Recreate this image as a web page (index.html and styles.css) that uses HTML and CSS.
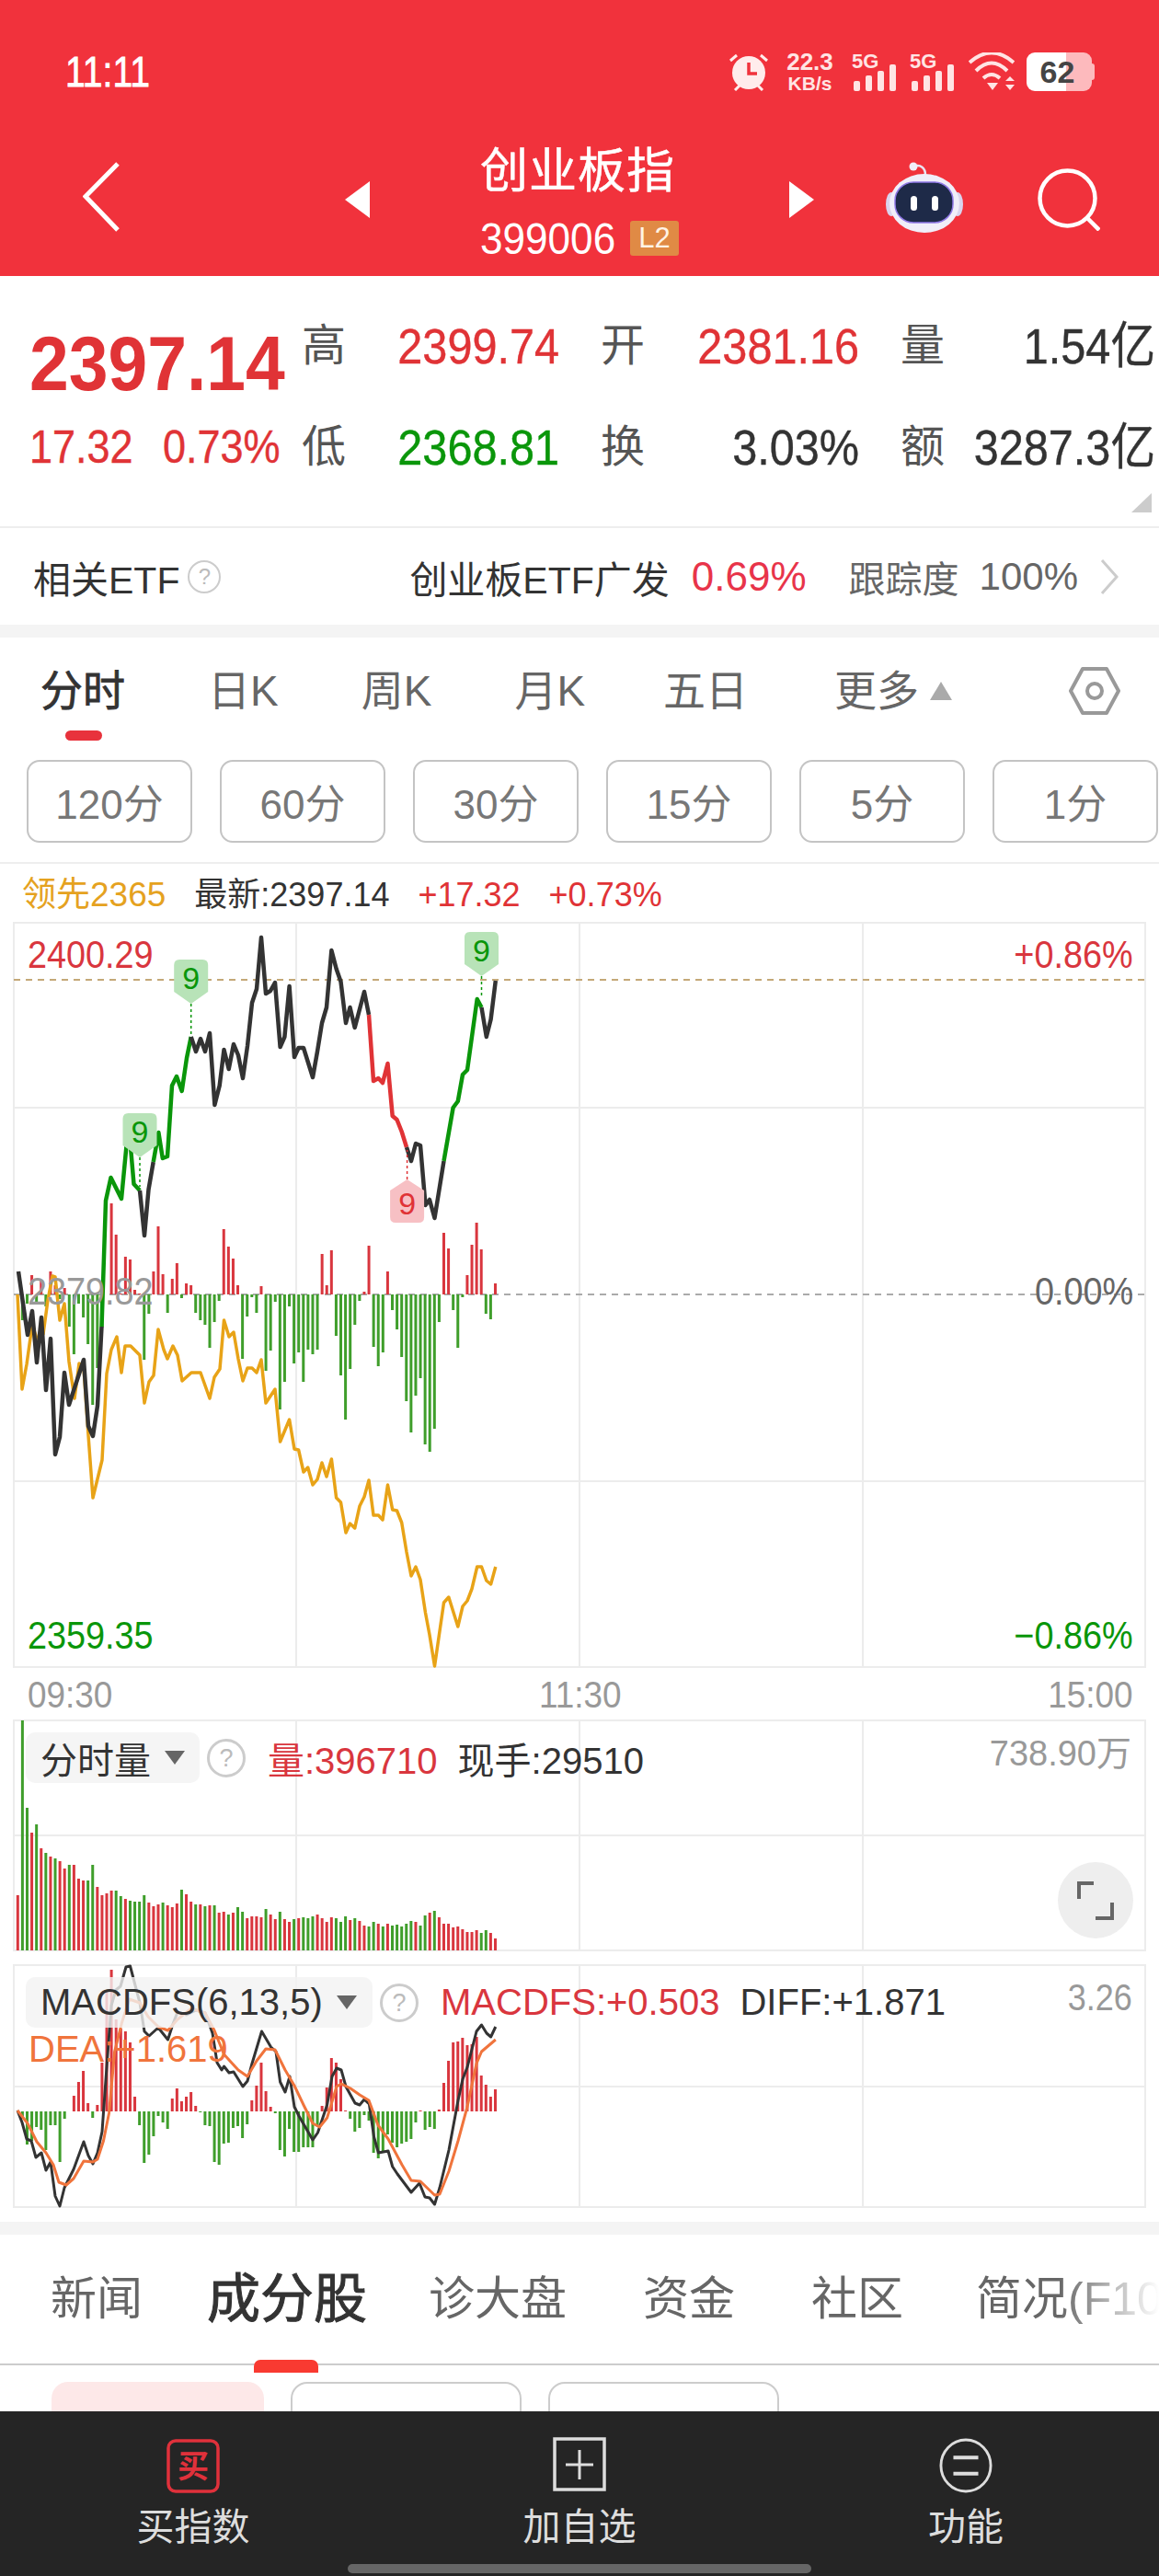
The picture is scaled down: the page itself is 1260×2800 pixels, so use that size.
FILE: index.html
```html
<!DOCTYPE html>
<html lang="zh-CN">
<head>
    <meta charset="UTF-8">
    <meta name="viewport" content="width=device-width, initial-scale=1.0">
    <title>创业板指 399006</title>
    <link rel="stylesheet" href="styles.css">
</head>
<body>
    <div class="app">
        <header class="topbar">
            <div class="status-row">
                <span class="clock">11:11</span>
                <div class="status-icons">
                    <svg class="alarm" viewBox="0 0 44 42">
                        <circle cx="22" cy="22" r="18" fill="#ffecec"/>
                        <path d="M22 11v12h9" fill="none" stroke="#f1323c" stroke-width="3.5"/>
                        <path d="M2 9l7-6M42 9l-7-6M7 41l5-5M37 41l-5-5" stroke="#ffecec" stroke-width="3"/>
                    </svg>
                    <div class="speed"><span class="speed-num">22.3</span><span class="speed-unit">KB/s</span></div>
                    <svg class="signal" viewBox="0 0 50 42">
                        <text x="0" y="17" class="signal-text">5G</text>
                        <rect x="2" y="31" width="7" height="11" rx="2"/>
                        <rect x="15" y="25" width="7" height="17" rx="2"/>
                        <rect x="28" y="20" width="7" height="22" rx="2"/>
                        <rect x="41" y="13" width="7" height="29" rx="2"/>
                    </svg>
                    <svg class="signal" viewBox="0 0 50 42">
                        <text x="0" y="17" class="signal-text">5G</text>
                        <rect x="2" y="31" width="7" height="11" rx="2"/>
                        <rect x="15" y="25" width="7" height="17" rx="2"/>
                        <rect x="28" y="20" width="7" height="22" rx="2"/>
                        <rect x="41" y="13" width="7" height="29" rx="2"/>
                    </svg>
                    <svg class="wifi" viewBox="0 0 50 42">
                        <path d="M1 11Q25-10 49 11M8 20Q25 3 42 20M16 28Q25 20 34 28" fill="none" stroke="#ffe4e4" stroke-width="4"/>
                        <path d="M20 33h12l-6 8zM40 31l5-5 5 5zM40 35h10l-5 6z" fill="#ffe4e4"/>
                    </svg>
                    <div class="battery">62</div>
                </div>
            </div>
            <nav class="nav-row">
                <svg class="back-icon" viewBox="0 0 40 76">
                    <path d="M38 2L3 37.5 38 74" fill="none" stroke="#fff" stroke-width="5"/>
                </svg>
                <span class="arrow arrow-left"></span>
                <div class="title-block">
                    <div class="title">创业板指</div>
                    <div class="subtitle"><span class="code">399006</span><span class="level-tag">L2</span></div>
                </div>
                <span class="arrow arrow-right"></span>
                <svg class="robot-icon" viewBox="0 0 84 77">
                    <path d="M30 5c8-3 13 2 13 9" fill="none" stroke="#e9e6f5" stroke-width="2.5"/>
                    <circle cx="30" cy="5" r="4.5" fill="#f1eff9"/>
                    <ellipse cx="6" cy="46" rx="6" ry="13" fill="#d9d4ee"/>
                    <ellipse cx="78" cy="46" rx="6" ry="13" fill="#d9d4ee"/>
                    <ellipse cx="42" cy="45" rx="38" ry="32" fill="#f0eef9"/>
                    <rect x="10" y="22" width="63" height="44" rx="20" fill="#1e2a48" stroke="#8f78e6" stroke-width="1.5"/>
                    <rect x="27" y="37" width="7" height="16" rx="3.5" fill="#fff"/>
                    <rect x="50" y="37" width="7" height="16" rx="3.5" fill="#fff"/>
                </svg>
                <svg class="search-icon" viewBox="0 0 68 68">
                    <circle cx="32.5" cy="32.5" r="30" fill="none" stroke="#fff" stroke-width="4.5"/>
                    <path d="M54 54l13 13" stroke="#fff" stroke-width="4.5"/>
                </svg>
            </nav>
        </header>

        <section class="quote">
            <div class="big-price up">2397.14</div>
            <div class="q-label">高</div>
            <div class="q-value up">2399.74</div>
            <div class="q-label wide">开</div>
            <div class="q-value up">2381.16</div>
            <div class="q-label wide">量</div>
            <div class="q-value">1.54亿</div>

            <div class="change up"><span class="change-num">17.32</span><span class="change-num">0.73%</span></div>
            <div class="q-label">低</div>
            <div class="q-value down">2368.81</div>
            <div class="q-label wide">换</div>
            <div class="q-value">3.03%</div>
            <div class="q-label wide">额</div>
            <div class="q-value">3287.3亿</div>
            <span class="corner-mark"></span>
        </section>

        <section class="etf-row">
            <span class="etf-title">相关ETF</span>
            <span class="help help-small">?</span>
            <div class="etf-info">
                <span class="etf-name">创业板ETF广发</span>
                <span class="etf-rate">0.69%</span>
                <span class="etf-track">跟踪度</span>
                <span class="etf-track-num">100%</span>
                <svg class="etf-more" viewBox="0 0 20 38">
                    <path d="M2 1l16 18L2 37" fill="none" stroke="#ccc" stroke-width="3"/>
                </svg>
            </div>
        </section>
        <div class="band"></div>

        <section class="period-tabs">
            <span class="period-tab active">分时</span>
            <span class="period-tab">日K</span>
            <span class="period-tab">周K</span>
            <span class="period-tab">月K</span>
            <span class="period-tab tab-five">五日</span>
            <span class="period-tab tab-more">更多</span>
            <span class="more-caret"></span>
            <svg class="settings-icon" viewBox="0 0 56 54">
                <path d="M15 3h26l13 24-13 24H15L2 27z" fill="none" stroke="#999" stroke-width="4" stroke-linejoin="round"/>
                <circle cx="28" cy="27" r="8" fill="none" stroke="#999" stroke-width="4"/>
            </svg>
        </section>

        <section class="minute-row">
            <button class="minute-btn">120分</button>
            <button class="minute-btn">60分</button>
            <button class="minute-btn">30分</button>
            <button class="minute-btn">15分</button>
            <button class="minute-btn">5分</button>
            <button class="minute-btn">1分</button>
        </section>

        <section class="info-row">
            <span class="lead">领先2365</span>
            <span>最新:2397.14</span>
            <span class="up">+17.32</span>
            <span class="up">+0.73%</span>
        </section>

        <section class="chart chart-main">
            <svg id="priceChart" class="chart-svg" viewBox="0 1003 1260 809"></svg>
            <span class="axis-left up-dark top-label">2400.29</span>
            <span class="axis-left grey mid-label">2379.82</span>
            <span class="axis-left down low-label">2359.35</span>
            <span class="axis-right up-dark top-label">+0.86%</span>
            <span class="axis-right dark-grey mid-label">0.00%</span>
            <span class="axis-right down low-label">−0.86%</span>
        </section>
        <div class="time-axis">
            <span class="time-left">09:30</span>
            <span class="time-mid">11:30</span>
            <span class="time-right">15:00</span>
        </div>

        <section class="chart chart-vol">
            <svg id="volumeChart" class="chart-svg" viewBox="0 1870 1260 250"></svg>
            <div class="legend">
                <div class="chip vol-chip">分时量<span class="chip-caret"></span></div>
                <span class="help">?</span>
                <span class="up-dark legend-first">量:396710</span>
                <span class="legend-next">现手:29510</span>
            </div>
            <span class="max-label vol-max">738.90万</span>
            <div class="expand-btn">
                <svg viewBox="0 0 40 42" class="expand-icon">
                    <path d="M2 19V2h16M38 23v17H20" fill="none" stroke="#666" stroke-width="4"/>
                </svg>
            </div>
        </section>

        <section class="chart chart-macd">
            <svg id="macdChart" class="chart-svg" viewBox="0 2136 1260 263"></svg>
            <div class="legend">
                <div class="chip macd-chip">MACDFS(6,13,5)<span class="chip-caret"></span></div>
                <span class="help">?</span>
                <span class="up-dark legend-first">MACDFS:+0.503</span>
                <span class="legend-next">DIFF:+1.871</span>
            </div>
            <span class="dea-label">DEA:+1.619</span>
            <span class="max-label macd-max">3.26</span>
        </section>
        <div class="band"></div>

        <section class="detail-tabs">
            <span class="detail-tab">新闻</span>
            <span class="detail-tab active">成分股</span>
            <span class="detail-tab">诊大盘</span>
            <span class="detail-tab">资金</span>
            <span class="detail-tab">社区</span>
            <span class="detail-tab">简况(F10)</span>
            <span class="detail-fade"></span>
        </section>
        <section class="filter-row">
            <span class="filter filter-on"></span>
            <span class="filter"></span>
            <span class="filter"></span>
        </section>

        <footer class="bottom-bar">
            <div class="bottom-item">
                <svg class="bottom-icon" viewBox="0 0 58 62">
                    <rect x="2" y="4" width="54" height="55" rx="8" fill="none" stroke="#e0313b" stroke-width="3.5"/>
                    <text x="29" y="44" class="buy-char">买</text>
                </svg>
                <span class="bottom-label">买指数</span>
            </div>
            <div class="bottom-item">
                <svg class="bottom-icon" viewBox="0 0 58 62">
                    <rect x="2" y="2" width="54" height="55" fill="none" stroke="#ddd" stroke-width="3.5"/>
                    <path d="M29 14v32M14 30h30" stroke="#ddd" stroke-width="3"/>
                </svg>
                <span class="bottom-label">加自选</span>
            </div>
            <div class="bottom-item">
                <svg class="bottom-icon" viewBox="0 0 60 62">
                    <ellipse cx="30" cy="31" rx="28" ry="29" fill="none" stroke="#ddd" stroke-width="3"/>
                    <path d="M16 22h28M16 40h28" stroke="#ddd" stroke-width="4"/>
                </svg>
                <span class="bottom-label">功能</span>
            </div>
            <span class="home-bar"></span>
        </footer>
    </div>
    <script src="chart.js"></script>
</body>
</html>
```

FILE: styles.css
```css
* {
    box-sizing: border-box;
}
body {
    margin: 0;
    background-color: #fff;
    font-family: "Liberation Sans", "Noto Sans CJK SC", sans-serif;
    color: #333;
}
.app {
    position: relative;
    width: 1260px;
    height: 2800px;
    overflow: hidden;
    background-color: #fff;
}
.up { color: #e03336; }
.up-dark { color: #d9363e; }
.down { color: #0a960a; }
.grey { color: #999; }
.dark-grey { color: #666; }

/* red header */
.topbar {
    height: 300px;
    padding-top: 57px;
    background-color: #f1323c;
    color: #fff;
    overflow: hidden;
}
.status-row {
    display: flex;
    align-items: center;
    height: 42px;
    margin-bottom: 56px;
    padding: 0 70px 0 71px;
}
.clock {
    font-size: 46px;
    line-height: 42px;
    -webkit-text-stroke: .8px #fff;
    transform: scaleX(.85);
    transform-origin: left;
}
.status-icons {
    display: flex;
    align-items: center;
    margin-left: auto;
}
.alarm {
    width: 44px;
    height: 42px;
}
.speed {
    display: flex;
    flex-direction: column;
    justify-content: space-between;
    width: 51px;
    height: 42px;
    margin-left: 19px;
    color: #ffe4e4;
    font-weight: bold;
    text-align: center;
}
.speed-num {
    font-size: 26px;
    line-height: 20px;
}
.speed-unit {
    font-size: 21px;
    line-height: 17px;
    white-space: nowrap;
}
.signal {
    width: 50px;
    height: 42px;
    margin-left: 20px;
    fill: #ffe4e4;
    overflow: visible;
}
.signal + .signal {
    margin-left: 13px;
}
.signal-text {
    font-size: 22px;
    font-weight: bold;
}
.wifi {
    width: 50px;
    height: 42px;
    margin-left: 14px;
}
.battery {
    position: relative;
    width: 71px;
    height: 42px;
    margin-left: 13px;
    margin-right: 3px;
    padding-right: 4px;
    border-radius: 9px;
    background: linear-gradient(to right, #fff 60%, #fdbabd 60%);
    color: #444;
    font-size: 34px;
    font-weight: bold;
    line-height: 42px;
    text-align: center;
}
.battery::after {
    content: "";
    position: absolute;
    right: -3px;
    top: 12px;
    width: 3px;
    height: 18px;
    border-radius: 0 3px 3px 0;
    background-color: #fdbabd;
}
.nav-row {
    display: flex;
    align-items: center;
    padding-left: 90px;
}
.back-icon {
    width: 40px;
    height: 76px;
    margin-top: -6px;
}
.arrow {
    width: 0;
    height: 0;
    border-top: 20px solid transparent;
    border-bottom: 20px solid transparent;
}
.arrow-left {
    margin-left: 245px;
    border-right: 27px solid #fff;
}
.arrow-right {
    margin-left: 120px;
    border-left: 27px solid #fff;
}
.title-block {
    width: 216px;
    margin-left: 120px;
}
.title {
    margin-top: 2px;
    font-size: 52px;
    letter-spacing: 1px;
    line-height: 58px;
    white-space: nowrap;
    -webkit-text-stroke: .5px #fff;
}
.subtitle {
    display: flex;
    align-items: center;
    height: 40px;
    margin-top: 24px;
}
.code {
    width: 163px;
    font-size: 49px;
    line-height: 40px;
    transform: scaleX(.9);
    transform-origin: left;
}
.level-tag {
    width: 53px;
    height: 38px;
    border-radius: 3px;
    background-color: #e08a45;
    color: #fff3e6;
    font-size: 31px;
    line-height: 38px;
    text-align: center;
}
.robot-icon {
    width: 84px;
    height: 77px;
    margin-left: 78px;
    margin-top: -6px;
}
.search-icon {
    width: 68px;
    height: 68px;
    margin-left: 81px;
}

/* price summary */
.quote {
    position: relative;
    display: grid;
    grid-template-columns: 298px 46px 232px 93px 233px 93px 229px;
    grid-template-rows: 60px 60px;
    row-gap: 50px;
    height: 274px;
    padding: 46px 0 0 32px;
    border-bottom: 2px solid #eee;
}
.big-price {
    margin-top: 13px;
    font-size: 84px;
    font-weight: bold;
    line-height: 72px;
    white-space: nowrap;
    transform: scaleX(.915);
    transform-origin: left;
}
.q-label {
    margin-left: -4px;
    color: #555;
    font-size: 48px;
    line-height: 60px;
    text-align: right;
    white-space: nowrap;
}
.q-value {
    font-size: 54px;
    line-height: 60px;
    text-align: right;
    white-space: nowrap;
    -webkit-text-stroke: .4px;
    transform: scaleX(.9);
    transform-origin: right;
}
.change {
    display: flex;
    gap: 20px;
    font-size: 50px;
    line-height: 60px;
    -webkit-text-stroke: .4px;
}
.change-num {
    transform: scaleX(.9);
    transform-origin: left;
}
.corner-mark {
    position: absolute;
    right: 8px;
    bottom: 15px;
    width: 0;
    height: 0;
    border-left: 22px solid transparent;
    border-bottom: 21px solid #ccc;
}
.etf-row {
    display: flex;
    align-items: center;
    height: 105px;
    padding: 0 44px 0 36px;
}
.etf-title {
    font-size: 41px;
}
.help {
    display: inline-block;
    width: 42px;
    height: 42px;
    border: 3px solid #ccc;
    border-radius: 50%;
    color: #bbb;
    font-size: 27px;
    line-height: 36px;
    text-align: center;
}
.help-small {
    width: 36px;
    height: 36px;
    margin-left: 9px;
    border-width: 2px;
    font-size: 24px;
    line-height: 32px;
}
.etf-info {
    display: flex;
    align-items: center;
    margin-left: auto;
}
.etf-name {
    font-size: 41px;
}
.etf-rate {
    margin-left: 24px;
    color: #e8344a;
    font-size: 44px;
}
.etf-track {
    margin-left: 46px;
    color: #666;
    font-size: 40px;
}
.etf-track-num {
    margin-left: 22px;
    color: #666;
    font-size: 42px;
}
.etf-more {
    width: 20px;
    height: 38px;
    margin-left: 24px;
}
.band {
    height: 14px;
    background-color: #f4f4f4;
}

/* period tabs */
.period-tabs {
    display: flex;
    align-items: center;
    gap: 90px;
    height: 133px;
    padding: 0 42px 17px 44px;
}
.period-tab {
    position: relative;
    color: #666;
    font-size: 46px;
    line-height: 56px;
}
.period-tab.active {
    color: #333;
    -webkit-text-stroke: .8px #333;
}
.period-tab.active::after {
    content: "";
    position: absolute;
    left: 27px;
    top: 71px;
    width: 40px;
    height: 11px;
    border-radius: 6px;
    background-color: #e8323c;
}
.tab-five {
    margin-left: -5px;
}
.tab-more {
    margin-left: 4px;
}
.more-caret {
    width: 0;
    height: 0;
    margin-left: -78px;
    border-left: 12px solid transparent;
    border-right: 12px solid transparent;
    border-bottom: 20px solid #aaa;
}
.settings-icon {
    width: 56px;
    height: 54px;
    margin-left: auto;
}
.minute-row {
    display: flex;
    gap: 30px;
    height: 113px;
    padding-left: 29px;
    border-bottom: 2px solid #eee;
}
.minute-btn {
    flex: none;
    width: 180px;
    height: 90px;
    border: 2px solid #c4c4c4;
    border-radius: 14px;
    background-color: #fff;
    color: #777;
    font-family: inherit;
    font-size: 44px;
}
.info-row {
    display: flex;
    gap: 31px;
    height: 64px;
    padding-left: 24px;
    font-size: 36px;
    line-height: 68px;
}
.lead {
    color: #e5a21f;
    font-size: 37px;
}

/* chart panels, drawn by chart.js */
.chart {
    position: relative;
}
.chart-svg {
    display: block;
    width: 1260px;
    height: 100%;
    overflow: visible;
}
.chart-main {
    height: 809px;
}
.chart-vol {
    height: 250px;
    margin-bottom: 16px;
}
.chart-macd {
    height: 263px;
    margin-bottom: 16px;
}
.axis-left,
.axis-right {
    position: absolute;
    font-size: 42px;
    line-height: 40px;
    transform: scaleX(.9);
}
.axis-left {
    left: 30px;
    transform-origin: left;
}
.axis-right {
    right: 28px;
    transform-origin: right;
}
.top-label { top: 15px; }
.mid-label { top: 381px; }
.low-label { top: 755px; }
.time-axis {
    display: flex;
    justify-content: space-between;
    height: 58px;
    padding: 0 28px 0 30px;
    color: #999;
    font-size: 41px;
    line-height: 60px;
}
.time-axis span {
    transform: scaleX(.9);
}
.time-left { transform-origin: left; }
.time-right { transform-origin: right; }
.legend {
    position: absolute;
    left: 28px;
    top: 13px;
    display: flex;
    align-items: center;
    height: 55px;
    font-size: 40px;
    white-space: nowrap;
}
.chip {
    display: flex;
    align-items: center;
    height: 55px;
    margin-right: 8px;
    padding-left: 16px;
    border-radius: 10px;
    background-color: rgba(242, 242, 242, .8);
}
.vol-chip {
    width: 189px;
}
.macd-chip {
    width: 377px;
}
.chip-caret {
    width: 0;
    height: 0;
    margin-left: 15px;
    border-left: 11px solid transparent;
    border-right: 11px solid transparent;
    border-top: 15px solid #666;
}
.legend-first {
    margin-left: 24px;
}
.legend-next {
    margin-left: 22px;
}
.max-label {
    position: absolute;
    color: #999;
    line-height: 40px;
}
.vol-max {
    right: 30px;
    top: 16px;
    font-size: 38px;
}
.macd-max {
    right: 29px;
    top: 15px;
    font-size: 40px;
    transform: scaleX(.9);
    transform-origin: right;
}
.dea-label {
    position: absolute;
    left: 31px;
    top: 71px;
    color: #f0743c;
    font-size: 40px;
    line-height: 40px;
}
.expand-btn {
    position: absolute;
    right: 28px;
    top: 154px;
    display: flex;
    align-items: center;
    justify-content: center;
    width: 82px;
    height: 83px;
    border-radius: 50%;
    background-color: #eee;
}
.expand-icon {
    width: 40px;
    height: 42px;
}

/* lower tabs */
.detail-tabs {
    position: relative;
    display: flex;
    align-items: center;
    gap: 70px;
    height: 142px;
    padding-left: 55px;
    border-bottom: 2px solid #ccc;
    white-space: nowrap;
}
.detail-tab {
    flex: none;
    color: #666;
    font-size: 50px;
    line-height: 60px;
}
.detail-tab:nth-child(3) { margin-left: -3px; }
.detail-tab:nth-child(4),
.detail-tab:nth-child(5) { margin-left: 13px; }
.detail-tab:nth-child(6) { margin-left: 9px; }
.detail-tab.active {
    position: relative;
    color: #333;
    font-size: 58px;
    -webkit-text-stroke: 1px #333;
}
.detail-tab.active::after {
    content: "";
    position: absolute;
    left: 51px;
    top: 96px;
    width: 70px;
    height: 14px;
    border-radius: 7px 7px 0 0;
    background-color: #f93a31;
}
.detail-fade {
    position: absolute;
    right: 0;
    top: 0;
    width: 110px;
    height: 100%;
    background: linear-gradient(to right, rgba(255, 255, 255, 0), #fff);
}
.filter-row {
    display: flex;
    gap: 29px;
    padding: 18px 0 0 56px;
}
.filter {
    width: 251px;
    height: 70px;
    border: 2px solid #ccc;
    border-radius: 18px;
}
.filter-on {
    width: 231px;
    border: none;
    background-color: #fde8e8;
}
.bottom-bar {
    position: absolute;
    left: 0;
    bottom: 0;
    display: flex;
    width: 1260px;
    height: 179px;
    background-color: #252525;
}
.bottom-item {
    flex: 1;
    display: flex;
    flex-direction: column;
    align-items: center;
    padding-top: 28px;
}
.bottom-icon {
    width: 58px;
    height: 62px;
}
.buy-char {
    fill: #e0313b;
    font-size: 34px;
    font-weight: bold;
    text-anchor: middle;
}
.bottom-label {
    margin-top: 12px;
    color: #ddd;
    font-size: 41px;
    line-height: 48px;
}
.home-bar {
    position: absolute;
    left: 378px;
    top: 166px;
    width: 504px;
    height: 10px;
    border-radius: 5px;
    background-color: #666;
}
```

FILE: chart.js
```js
// Intraday charts: price, volume and MACDFS panels, all on the same minute axis.
const SVG_NS = 'http://www.w3.org/2000/svg';
const RED = '#d9363e';
const BAR_GREEN = '#3f9e2b';
const LINE_GREEN = '#0a960a';
const GRID = '#ececec';

const barX = i => 19.3 + 5.09 * i;

function add(svg, tag, attrs, text) {
    const el = document.createElementNS(SVG_NS, tag);
    for (const key in attrs) el.setAttribute(key, attrs[key]);
    if (text) el.textContent = text;
    svg.appendChild(el);
    return el;
}

function drawFrame(svg, top, bottom, rows) {
    add(svg, 'rect', { x: 15, y: top, width: 1230, height: bottom - top, fill: 'none', stroke: GRID, 'stroke-width': 2 });
    [322, 630, 938].forEach(x => add(svg, 'line', { x1: x, x2: x, y1: top, y2: bottom, stroke: GRID, 'stroke-width': 2 }));
    rows.forEach(y => add(svg, 'line', { x1: 15, x2: 1245, y1: y, y2: y, stroke: GRID, 'stroke-width': 2 }));
}

// positive = red bar above base, negative = green bar below base
function drawSignedBars(svg, base, values) {
    values.forEach((v, i) => {
        if (!v) return;
        add(svg, 'rect', {
            x: barX(i) - 1.5,
            y: v > 0 ? base - v : base,
            width: 3,
            height: Math.abs(v),
            fill: v > 0 ? RED : BAR_GREEN
        });
    });
}

function drawLine(svg, points, color, width) {
    add(svg, 'polyline', {
        points: points.map(p => p.join(',')).join(' '),
        fill: 'none',
        stroke: color,
        'stroke-width': width,
        'stroke-linejoin': 'round'
    });
}

function drawBadge(svg, x, top, up, anchorY, color, bg) {
    // up = tip on top of the tag, pointing at the line above it; otherwise tip below
    const w = 18.5;
    const h = 41;
    const path = up
        ? `M${x} ${top - 6}l${w} 12v${h - 12}q0 6-6 6h-${2 * w - 12}q-6 0-6-6v-${h - 12}z`
        : `M${x - w + 6} ${top}h${2 * w - 12}q6 0 6 6v${h - 12}l-${w} 13-${w}-13v-${h - 12}q0-6 6-6z`;
    const tip = up ? top - 6 : top + h + 7;
    add(svg, 'line', { x1: x, x2: x, y1: tip, y2: anchorY, stroke: color, 'stroke-width': 1.5, 'stroke-dasharray': '3 3' });
    add(svg, 'path', { d: path, fill: bg });
    add(svg, 'text', {
        x: x,
        y: top + 32,
        fill: color,
        'font-size': 34,
        'text-anchor': 'middle',
        'font-family': 'Liberation Sans, sans-serif'
    }, '9');
}

const priceBars = [
    0, -28, -10, 21, -10, 15, -13, 25, 10, -5, 7, -35, -65, -10, -25, -54, -120, -80, -36, 0,
    99, 65, 1, 41, 38, 5, 1, -71, -21, 25, 74, 22, -20, 17, 34, -4, 12, 10, -20, -28,
    -33, -58, -30, -7, 71, 52, 39, 10, -70, -24, -3, -20, 9, -83, -61, -8, -125, -95, -13, -75,
    -63, -95, -60, -65, -60, 44, 10, 48, -45, -88, -136, -81, -33, -7, 3, 53, -57, -78, -63, 25,
    -17, -38, -68, -116, -150, -110, -91, -163, -171, -146, -30, 67, 50, -17, -58, -3, 21, 54, 78, 49,
    -21, -27, 12
];

const avgLine = [
    [19, 1407], [24, 1510], [29, 1483], [35, 1440], [40, 1455], [47, 1450], [52, 1413], [57, 1387], [60, 1388], [65, 1435],
    [70, 1417], [75, 1480], [81, 1520], [86, 1482], [91, 1487], [96, 1560], [101, 1628], [111, 1587], [116, 1493], [121, 1467],
    [127, 1453], [132, 1492], [136, 1463], [142, 1463], [152, 1473], [157, 1525], [162, 1502], [167, 1495], [172, 1445], [178, 1467],
    [182, 1477], [188, 1463], [193, 1473], [198, 1501], [208, 1492], [218, 1492], [228, 1520], [233, 1497], [239, 1488], [243.5, 1435],
    [249, 1453], [254, 1448], [259, 1477], [264, 1501], [269, 1487], [274, 1487], [279, 1492], [284, 1478], [289, 1525], [299, 1510],
    [304.6, 1567], [314.6, 1543], [320, 1575], [324.6, 1576], [330, 1600], [334.7, 1595], [340, 1614], [345, 1608], [350, 1590], [355, 1605],
    [360.4, 1586], [365.6, 1628], [370.5, 1633], [376, 1666], [380.5, 1656], [385.7, 1661], [391, 1637], [396, 1627], [401, 1609], [406, 1647],
    [411.4, 1647], [416, 1652], [421.5, 1614], [426.7, 1641], [431.5, 1642], [436.7, 1655], [442, 1687], [447, 1713], [452, 1703], [457, 1717],
    [462.5, 1753], [467, 1777], [472.5, 1811], [482.5, 1742], [487.8, 1736], [497.8, 1768], [503, 1746], [508, 1740], [513, 1727], [518.7, 1703],
    [523.5, 1703], [528.8, 1718], [533.6, 1722], [538.8, 1703]
];

// price line, split where the signal colour changes
const priceRuns = [
    ['#333', [[20, 1382], [30, 1451], [35, 1425], [40, 1481], [45, 1432], [50, 1511], [55, 1455], [60, 1581], [65, 1562], [70, 1492], [75, 1527], [91, 1478], [96, 1550], [101, 1561], [106, 1528], [110.5, 1442]]],
    [LINE_GREEN, [[110.5, 1442], [115, 1305], [120.5, 1280], [132, 1303], [138, 1240], [141.5, 1241], [145.5, 1287], [152, 1294]]],
    ['#333', [[152, 1294], [157, 1343], [161.5, 1293], [166.7, 1263]]],
    [LINE_GREEN, [[166.7, 1263], [172.4, 1231], [176.8, 1259], [182, 1257], [187, 1180], [192, 1170], [197.7, 1186], [203, 1150], [207.7, 1127]]],
    ['#333', [[207.7, 1127], [213, 1143], [218, 1129], [223, 1143], [228, 1123], [233.4, 1201], [238.7, 1180], [243.5, 1141], [248.7, 1162], [254, 1135], [259, 1147], [264, 1172], [269, 1137], [274, 1090], [279, 1075], [284, 1019], [289, 1080], [294, 1077], [299, 1068], [304.6, 1138], [309.4, 1127], [314.6, 1072], [320, 1149], [324.6, 1139], [330, 1139], [340, 1171], [345, 1143], [350, 1112], [355, 1095], [360.4, 1033], [365.6, 1053], [370.5, 1067], [376, 1112], [380.5, 1095], [385.7, 1117], [396, 1078], [401, 1103]]],
    ['#e03336', [[401, 1103], [406, 1175], [411.4, 1172], [416, 1177], [421.5, 1156], [426.7, 1213], [431.5, 1217], [436.7, 1230], [442, 1247]]],
    ['#333', [[442, 1247], [447, 1262], [452, 1243], [457, 1245], [462.5, 1310], [467, 1304], [472.5, 1324], [482.5, 1262]]],
    [LINE_GREEN, [[482.5, 1262], [492.6, 1204], [497.8, 1197], [503, 1168], [508, 1163], [513, 1127], [518.7, 1086], [523.5, 1095]]],
    ['#333', [[523.5, 1095], [528.8, 1127], [533.6, 1108], [538.8, 1066]]]
];

const volumeBars = [
    60, -250, -155, 128, -137, 111, -106, 102, -100, 97, 89, -93, 93, 78, 76, -76, -93, 69, 60, 62,
    65, -65, -59, 56, -54, -53, -53, -60, 52, 48, 50, -52, 49, 47, 51, -66, 61, 53, -50, 50,
    -48, 49, -49, 41, 42, -39, 41, -47, -42, 35, 37, 37, 36, -45, 39, 34, -42, 34, 31, -34,
    35, -36, -35, -37, 39, 35, 31, 36, -35, -31, -37, 33, -35, 32, 27, -26, -31, 29, -26, 29,
    -27, -28, -26, -29, -32, 31, -27, -38, 41, -43, 36, 29, 29, 25, 26, 23, 20, 20, 22, -19,
    -22, 19, 13
];

const macdBars = [
    0, -8, -36, -32, -17, -20, -42, -15, -15, -55, -8, 0, 17, 32, 44, 9, -7, 7, 53, 131,
    154, 100, 90, 87, 75, 16, -15, -56, -47, -27, -5, -12, -19, 14, 25, 11, 16, 21, 6, -1,
    -15, -16, -55, -58, -35, -34, -18, -16, -29, -14, 12, 28, 53, 22, 5, -2, -42, -49, -19, -44,
    -44, -39, -39, -39, -15, 6, 26, 58, 53, 35, 1, -8, -22, -18, -4, -10, -45, -51, -44, -25,
    -34, -39, -35, -33, -30, -12, 1, -20, -17, -19, 2, 31, 55, 75, 76, 80, 72, 73, 81, 39,
    29, 16, 24
];

const diffLine = [
    [19, 2294], [24, 2307], [29, 2325], [34, 2327], [39, 2345], [45, 2340], [50, 2359], [55, 2350], [60, 2387], [65, 2398],
    [70, 2378], [80, 2358], [91, 2328], [96, 2343], [101, 2352], [106, 2340], [111, 2317], [116, 2247], [121, 2180], [126, 2163],
    [131, 2159], [137, 2138], [141.5, 2137], [147, 2158], [152, 2177], [157, 2208], [162, 2213], [172, 2204], [182.5, 2217], [188, 2200],
    [193, 2187], [203, 2190], [213, 2185], [223, 2188], [231, 2210], [236, 2242], [241, 2250], [243.5, 2246], [249, 2253], [254, 2252],
    [264, 2268], [269, 2262], [274, 2243], [284.5, 2208], [294.5, 2225], [300, 2230], [304.6, 2263], [310, 2274], [315, 2257], [320, 2290],
    [325, 2300], [340, 2326], [345.5, 2318], [355.6, 2288], [361, 2257], [366, 2248], [371, 2250], [376, 2268], [386, 2286], [391, 2288],
    [396, 2282], [401.4, 2287], [406.6, 2323], [411.4, 2340], [422, 2338], [426.7, 2355], [432, 2363], [447, 2383], [456, 2373], [462, 2388],
    [467, 2389], [472.5, 2396], [478, 2378], [488, 2337], [498, 2283], [503, 2260], [508, 2247], [518, 2208], [523.5, 2201], [529, 2210],
    [533.6, 2214], [538.8, 2203]
];

const deaLine = [
    [19, 2294], [30, 2308], [40, 2328], [50, 2340], [58, 2353], [64, 2372], [72, 2375], [80, 2368], [91, 2349], [101, 2350],
    [106, 2347], [112.5, 2327], [118.5, 2297], [124.6, 2230], [132.6, 2198], [140.6, 2173], [152, 2177], [161, 2192], [172, 2203], [182.5, 2207],
    [193, 2195], [208, 2183], [223, 2188], [233, 2207], [243.5, 2233], [259, 2250], [269, 2257], [279, 2240], [289, 2227], [299, 2228],
    [310, 2250], [320, 2267], [330, 2288], [340, 2308], [347.5, 2312], [355.6, 2302], [366, 2268], [371, 2265], [381, 2270], [391, 2277],
    [401, 2283], [411, 2310], [422, 2325], [437, 2353], [447, 2370], [457, 2371], [472.5, 2386], [478, 2385], [488, 2360], [498, 2327],
    [508, 2290], [518, 2243], [523.5, 2230], [538.8, 2217]
];

// price panel
const price = document.getElementById('priceChart');
drawFrame(price, 1003, 1812, [1204, 1610]);
add(price, 'line', { x1: 15, x2: 1245, y1: 1065, y2: 1065, stroke: '#c4a878', 'stroke-width': 2, 'stroke-dasharray': '7 6' });
add(price, 'line', { x1: 15, x2: 1245, y1: 1407, y2: 1407, stroke: '#aaa', 'stroke-width': 2, 'stroke-dasharray': '7 6' });
drawSignedBars(price, 1407, priceBars);
drawLine(price, avgLine, '#e8a317', 3.5);
priceRuns.forEach(run => drawLine(price, run[1], run[0], 4.5));
drawBadge(price, 152, 1210, false, 1290, LINE_GREEN, '#b8e3b8');
drawBadge(price, 207.7, 1043, false, 1125, LINE_GREEN, '#b8e3b8');
drawBadge(price, 523.5, 1013, false, 1085, LINE_GREEN, '#b8e3b8');
drawBadge(price, 442.6, 1288, true, 1250, '#e03336', '#f7c0c4');

// volume panel, bars all grow up from the floor
const volume = document.getElementById('volumeChart');
drawFrame(volume, 1870, 2120, [1995]);
volumeBars.forEach((v, i) => {
    const h = Math.abs(v);
    add(volume, 'rect', { x: barX(i) - 1.5, y: 2120 - h, width: 3, height: h, fill: v > 0 ? RED : BAR_GREEN });
});

// MACDFS panel
const macd = document.getElementById('macdChart');
drawFrame(macd, 2136, 2399, [2268]);
drawSignedBars(macd, 2295, macdBars);
drawLine(macd, diffLine, '#333', 3);
drawLine(macd, deaLine, '#f0743c', 3);
```
